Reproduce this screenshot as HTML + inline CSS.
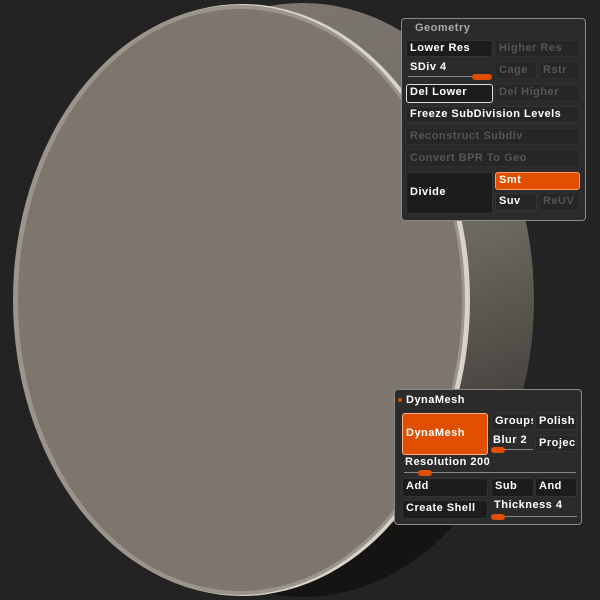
<!DOCTYPE html>
<html><head><style>
body{margin:0;width:600px;height:600px;background:#232323;overflow:hidden;position:relative;font-family:"Liberation Sans",sans-serif;}
.p{position:absolute;background:#2b2b2b;border:1px solid #8a8a8a;border-radius:4px;box-sizing:border-box;}
.b{position:absolute;background:#1c1c1c;border:1px solid #333;border-radius:3px;box-sizing:border-box;color:#fff;font-weight:bold;font-size:11px;letter-spacing:0.5px;padding-left:3px;line-height:15px;white-space:nowrap;overflow:hidden;}
.d{background:#262626;color:#555;border-color:#2e2e2e}
.o{background:#e04e00;border-color:#ff9a60;}
.t{position:absolute;color:#fff;font-weight:bold;font-size:11px;letter-spacing:0.5px;white-space:nowrap;}
.sl{position:absolute;height:1px;background:#888;}
.k{position:absolute;height:6px;background:#e04e00;border-radius:3px;}
</style></head><body>
<svg width="600" height="600" style="position:absolute;left:0;top:0">
<defs>
<linearGradient id="side" x1="0" y1="0" x2="0.3" y2="1"><stop offset="0" stop-color="#807a72"/><stop offset="0.6" stop-color="#6c675f"/><stop offset="0.85" stop-color="#4a4641"/><stop offset="1" stop-color="#151412"/></linearGradient>
</defs>
<ellipse cx="303" cy="300" rx="231" ry="297" fill="url(#side)"/>
<ellipse cx="242" cy="300" rx="228" ry="296" fill="#d8d3ca"/>
<ellipse cx="239" cy="300" rx="226" ry="295" fill="#9a948b"/>
<ellipse cx="240" cy="300" rx="222" ry="291" fill="#7c766f"/>
</svg>
<div class="p" style="left:401px;top:18px;width:185px;height:203px;">
<div class="t" style="left:13px;top:3px;color:#aaa;">Geometry</div>
</div>
<div class="b" style="left:406px;top:40px;width:87px;height:17px;">Lower Res</div>
<div class="b d" style="left:495px;top:40px;width:85px;height:17px;">Higher Res</div>
<div class="t" style="left:410px;top:61px;">SDiv 4</div>
<div class="sl" style="left:408px;top:76px;width:84px;"></div>
<div class="k" style="left:472px;top:74px;width:20px;"></div>
<div class="b d" style="left:495px;top:62px;width:42px;height:17px;">Cage</div>
<div class="b d" style="left:539px;top:62px;width:41px;height:17px;">Rstr</div>
<div class="b" style="left:406px;top:84px;width:87px;height:19px;border:1px solid #ddd;">Del Lower</div>
<div class="b d" style="left:495px;top:84px;width:85px;height:17px;">Del Higher</div>
<div class="b" style="left:406px;top:106px;width:174px;height:17px;background:#262626;">Freeze SubDivision Levels</div>
<div class="b d" style="left:406px;top:128px;width:174px;height:17px;">Reconstruct Subdiv</div>
<div class="b d" style="left:406px;top:150px;width:174px;height:17px;">Convert BPR To Geo</div>
<div class="b" style="left:406px;top:172px;width:87px;height:42px;line-height:38px;">Divide</div>
<div class="b o" style="left:495px;top:172px;width:85px;height:18px;">Smt</div>
<div class="b" style="left:495px;top:193px;width:42px;height:18px;background:#262626;">Suv</div>
<div class="b d" style="left:539px;top:193px;width:41px;height:18px;">ReUV</div>

<div class="p" style="left:394px;top:389px;width:188px;height:136px;"></div>
<div style="position:absolute;left:398px;top:398px;width:4px;height:4px;border-radius:2px;background:#e04e00"></div>
<div class="t" style="left:406px;top:394px;">DynaMesh</div>
<div class="b o" style="left:402px;top:413px;width:86px;height:42px;line-height:38px;border-color:#ffb080;">DynaMesh</div>
<div class="b" style="left:491px;top:413px;width:43px;height:17px;background:#262626;">Groups</div>
<div class="b" style="left:535px;top:413px;width:42px;height:17px;background:#262626;">Polish</div>
<div class="t" style="left:493px;top:434px;">Blur 2</div>
<div class="sl" style="left:491px;top:449px;width:42px;"></div>
<div class="k" style="left:491px;top:447px;width:14px;"></div>
<div class="b" style="left:535px;top:435px;width:42px;height:17px;background:#262626;">Projec</div>
<div class="t" style="left:405px;top:456px;">Resolution 200</div>
<div class="sl" style="left:404px;top:472px;width:172px;"></div>
<div class="k" style="left:418px;top:470px;width:14px;"></div>
<div class="b" style="left:402px;top:478px;width:86px;height:19px;">Add</div>
<div class="b" style="left:491px;top:478px;width:43px;height:19px;">Sub</div>
<div class="b" style="left:535px;top:478px;width:42px;height:19px;">And</div>
<div class="b" style="left:402px;top:500px;width:86px;height:19px;">Create Shell</div>
<div class="t" style="left:494px;top:499px;">Thickness 4</div>
<div class="sl" style="left:491px;top:516px;width:86px;"></div>
<div class="k" style="left:491px;top:514px;width:14px;"></div>
</body></html>
